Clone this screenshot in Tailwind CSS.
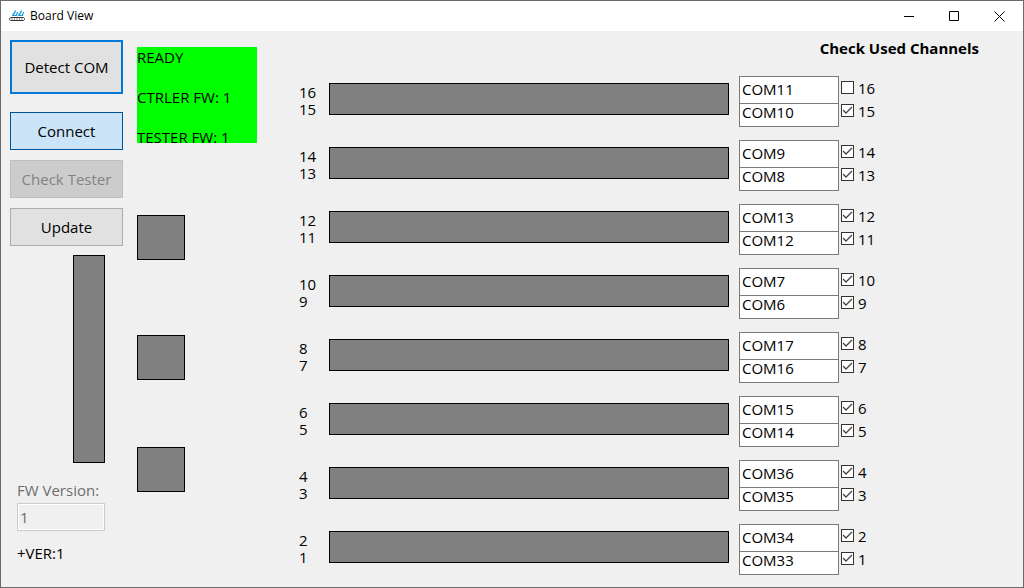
<!DOCTYPE html>
<html lang="en">
<head>
<meta charset="utf-8">
<meta name="viewport" content="width=device-width, initial-scale=1">
<title>Board View</title>
<script src="https://cdn.jsdelivr.net/npm/@tailwindcss/browser@4"></script>
</head>
<body class="flex min-h-screen flex-col border border-[#6b6b6b] bg-[#f0f0f0] font-['Open_Sans',sans-serif] text-[15px] leading-5 text-black">
<header class="flex h-[30px] items-center bg-white pl-2">
  <svg class="h-4 w-4" viewBox="0 0 16 16" fill="none" aria-hidden="true">
    <path d="M6.500 2.500L5.500 5L3.500 7.500M12.500 2.500L11.500 5L9.500 7.500" stroke="#1b9be0" stroke-width="1.400"/>
    <path d="M3 7.500h4.500L8.500 4M9 7.500h4.500L14.500 4" stroke="#1b9be0" stroke-width="1.200"/>
    <path d="M2 9.500h12.500l1 1v1l-1 1h-13l-1-1v-1z" stroke="#333"/>
    <path d="M2.500 11h12" stroke="#333" stroke-dasharray="1 1.500"/>
  </svg>
  <h1 class="ml-[5px] flex-1 text-[12px]">Board View</h1>
  <button class="flex h-[30px] w-[45px] items-center justify-center" aria-label="Minimize"><svg class="h-[10px] w-[10px]" viewBox="0 0 10 10" aria-hidden="true"><path d="M0 5.500h10" stroke="#000"/></svg></button>
  <button class="flex h-[30px] w-[45px] items-center justify-center" aria-label="Maximize"><svg class="h-[10px] w-[10px]" viewBox="0 0 10 10" fill="none" aria-hidden="true"><path d="M.5 .5h9v9h-9z" stroke="#000"/></svg></button>
  <button class="flex h-[30px] w-[47px] items-center justify-center" aria-label="Close"><svg class="h-[11px] w-[11px]" viewBox="0 0 11 11" aria-hidden="true"><path d="M.5 .5l10 10M10.500 .5l-10 10" stroke="#000"/></svg></button>
</header>
<main class="flex flex-1 pl-[9px]">
  <section class="flex w-[113px] shrink-0 flex-col pt-[9px]">
    <button class="h-[54px] border-2 border-[#0078d7] bg-[#e1e1e1]">Detect COM</button>
    <button class="mt-[18px] h-[38px] border border-[#005499] bg-[#cce4f7]">Connect</button>
    <button class="mt-[10px] h-[38px] border border-[#bfbfbf] bg-[#cccccc] text-[#838383]" disabled>Check Tester</button>
    <button class="mt-[10px] h-[38px] border border-[#adadad] bg-[#e1e1e1]">Update</button>
    <div class="mt-[9px] mr-[18px] h-[208px] w-8 self-end border border-black bg-[#808080]"></div>
    <div class="mt-[17px] mr-[18px] ml-[7px] flex flex-col">
      <label for="fw" class="text-[#6d6d6d]">FW Version:</label>
      <input id="fw" value="1" disabled class="mt-[3px] h-7 w-full border border-[#cccccc] bg-[#f0f0f0] px-[2px] text-[#6d6d6d] inset-ring inset-ring-white">
      <output class="mt-3">+VER:1</output>
    </div>
  </section>
  <section class="ml-[14px] flex w-[120px] shrink-0 flex-col pt-4">
    <div class="h-24 overflow-hidden bg-[#00ff00]">
      <p>READY</p>
      <p class="mt-5">CTRLER FW: 1</p>
      <p class="mt-5">TESTER FW: 1</p>
    </div>
    <div class="mt-[72px] h-[45px] w-12 border border-black bg-[#808080]"></div>
    <div class="mt-[75px] h-[45px] w-12 border border-black bg-[#808080]"></div>
    <div class="mt-[67px] h-[45px] w-12 border border-black bg-[#808080]"></div>
  </section>
  <section class="ml-[42px] flex min-w-0 flex-1 flex-col pt-[7px]">
    <h2 class="mr-11 self-end font-bold">Check Used Channels</h2>
    <div id="channels" class="mt-[18px] flex flex-col gap-[13px]"></div>
  </section>
</main>
<script>
const pairs = [
  [16, "COM11", false, 15, "COM10", true],
  [14, "COM9", true, 13, "COM8", true],
  [12, "COM13", true, 11, "COM12", true],
  [10, "COM7", true, 9, "COM6", true],
  [8, "COM17", true, 7, "COM16", true],
  [6, "COM15", true, 5, "COM14", true],
  [4, "COM36", true, 3, "COM35", true],
  [2, "COM34", true, 1, "COM33", true],
];
const tick = (n, on) => `
  <label class="flex h-[23px] items-center gap-1">
    <span class="grid">
      <input type="checkbox" ${on ? "checked" : ""} class="peer col-start-1 row-start-1 h-[13px] w-[13px] appearance-none border border-[#333333] bg-white">
      <svg class="pointer-events-none invisible col-start-1 row-start-1 h-[13px] w-[13px] peer-checked:visible" viewBox="0 0 13 13" fill="none" aria-hidden="true"><path d="M2 6l3 3 6-6" stroke="#444" stroke-width="1.300"/></svg>
    </span>
    <span>${n}</span>
  </label>`;
document.getElementById("channels").innerHTML = pairs.map(([a, ca, oa, b, cb, ob]) => `
  <div class="flex h-[51px]">
    <div class="w-[30px] pt-2 leading-[17px]"><div>${a}</div><div>${b}</div></div>
    <div class="mt-[7px] h-8 flex-1 border border-black bg-[#808080]"></div>
    <div class="ml-[10px] flex w-[100px] flex-col">
      <input value="${ca}" aria-label="Port for channel ${a}" class="h-7 w-full border border-[#7a7a7a] bg-white px-[2px] pb-[2px]">
      <input value="${cb}" aria-label="Port for channel ${b}" class="h-[23px] w-full border border-t-0 border-[#7a7a7a] bg-white px-[2px] pb-[6px] leading-4">
    </div>
    <div class="ml-[2px] w-[182px]">${tick(a, oa)}${tick(b, ob)}</div>
  </div>`).join("");
</script>
</body>
</html>
